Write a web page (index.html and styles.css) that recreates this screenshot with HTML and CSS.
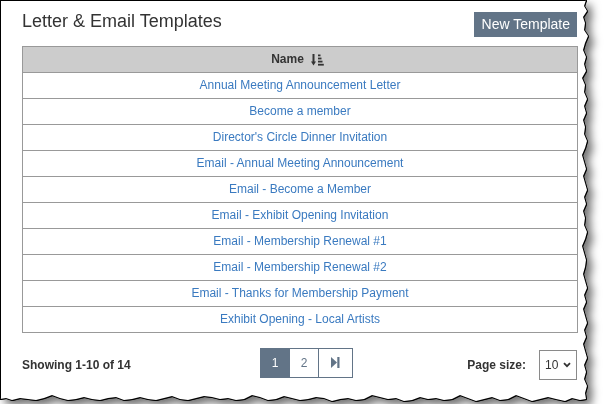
FILE: index.html
```html
<!DOCTYPE html>
<html lang="en">
<head>
<meta charset="utf-8">
<title>Letter &amp; Email Templates</title>
<link rel="stylesheet" href="styles.css">
</head>
<body>
<div class="sheet">
  <div class="paper">
    <div class="topbar">
      <h1 class="title">Letter &amp; Email Templates</h1>
      <button class="btn" type="button">New Template</button>
    </div>
    <table class="grid">
      <thead>
        <tr><th><span class="th-inner">Name <svg class="sort" width="13" height="12" viewBox="0 0 13 12"><path d="M2.5 0V9" stroke="#333" stroke-width="2" fill="none"/><path d="M0 7.5L2.5 11.5L5 7.5Z" fill="#333"/><rect x="7" y="0.5" width="2.5" height="1.8" fill="#333"/><rect x="7" y="3.6" width="3.5" height="1.8" fill="#333"/><rect x="7" y="6.7" width="4.5" height="1.8" fill="#333"/><rect x="7" y="9.8" width="5.8" height="1.8" fill="#333"/></svg></span></th></tr>
      </thead>
      <tbody>
        <tr><td><a class="link" href="#">Annual Meeting Announcement Letter</a></td></tr>
        <tr><td><a class="link" href="#">Become a member</a></td></tr>
        <tr><td><a class="link" href="#">Director's Circle Dinner Invitation</a></td></tr>
        <tr><td><a class="link" href="#">Email - Annual Meeting Announcement</a></td></tr>
        <tr><td><a class="link" href="#">Email - Become a Member</a></td></tr>
        <tr><td><a class="link" href="#">Email - Exhibit Opening Invitation</a></td></tr>
        <tr><td><a class="link" href="#">Email - Membership Renewal #1</a></td></tr>
        <tr><td><a class="link" href="#">Email - Membership Renewal #2</a></td></tr>
        <tr><td><a class="link" href="#">Email - Thanks for Membership Payment</a></td></tr>
        <tr><td><a class="link" href="#">Exhibit Opening - Local Artists</a></td></tr>
      </tbody>
    </table>
    <div class="footer">
      <span class="count">Showing 1-10 of 14</span>
      <nav class="pager">
        <span class="page page-current">1</span>
        <span class="page">2</span>
        <span class="page page-last"><svg width="9" height="11" viewBox="0 0 9 11"><path d="M0 0L6 5.5L0 11Z" fill="#627487"/><rect x="6.3" y="0" width="2.2" height="11" fill="#627487"/></svg></span>
      </nav>
      <div class="size">
        <span class="size-label">Page size:</span>
        <span class="select">10<svg class="chev" width="8" height="6" viewBox="0 0 8 6"><path d="M1 1.2L4 4.2L7 1.2" stroke="#333" stroke-width="1.8" fill="none"/></svg></span>
      </div>
    </div>
  </div>
</div>
</body>
</html>
```

FILE: styles.css
```css
html, body {
  margin: 0;
  padding: 0;
  background: #ffffff;
}

body {
  font-family: "Liberation Sans", Arial, sans-serif;
  color: #333333;
}

.sheet {
  width: 592px;
  height: 404px;
  filter: drop-shadow(1px 0 0 #000000) drop-shadow(0 1px 0 #000000) drop-shadow(5px 5px 4px rgba(0, 0, 0, 0.55));
}

.paper {
  box-sizing: border-box;
  width: 592px;
  height: 404px;
  background: #ffffff;
  border-top: 1px solid #000000;
  border-left: 1px solid #000000;
  padding: 11px 15px 0 21px;
  clip-path: polygon(0 0, 586px 0, 584px 6px, 587px 11px, 583px 17px, 585px 23px, 584px 30px, 588px 36px, 585px 43px, 583px 50px, 586px 57px, 584px 64px, 586px 71px, 582px 78px, 585px 85px, 584px 92px, 587px 99px, 584px 106px, 586px 113px, 583px 120px, 585px 127px, 584px 134px, 587px 141px, 585px 148px, 582px 155px, 584px 162px, 586px 169px, 583px 176px, 585px 183px, 587px 190px, 584px 197px, 586px 204px, 583px 211px, 585px 218px, 584px 225px, 587px 232px, 585px 239px, 582px 246px, 584px 253px, 586px 260px, 585px 267px, 583px 274px, 585px 281px, 587px 288px, 584px 295px, 586px 302px, 583px 309px, 585px 316px, 587px 323px, 584px 330px, 586px 337px, 583px 344px, 585px 351px, 587px 358px, 584px 365px, 586px 372px, 584px 379px, 587px 386px, 585px 393px, 586px 399px, 580px 400px, 572px 398px, 565px 401px, 556px 399px, 548px 397px, 540px 399px, 532px 401px, 524px 398px, 516px 395px, 508px 399px, 500px 400px, 492px 397px, 484px 399px, 476px 401px, 468px 398px, 460px 395px, 452px 399px, 444px 400px, 436px 398px, 428px 399px, 420px 397px, 412px 400px, 404px 401px, 396px 398px, 388px 399px, 380px 397px, 372px 395px, 364px 399px, 356px 400px, 348px 398px, 340px 399px, 332px 401px, 324px 398px, 316px 397px, 308px 399px, 300px 400px, 292px 398px, 284px 396px, 276px 399px, 268px 400px, 260px 397px, 252px 395px, 244px 399px, 236px 400px, 228px 398px, 220px 399px, 212px 397px, 204px 396px, 196px 398px, 188px 400px, 180px 399px, 172px 396px, 164px 398px, 156px 400px, 148px 399px, 140px 397px, 132px 399px, 124px 400px, 116px 397px, 108px 398px, 100px 400px, 92px 399px, 84px 397px, 76px 399px, 68px 400px, 60px 398px, 52px 395px, 44px 398px, 36px 400px, 28px 399px, 20px 398px, 12px 400px, 6px 398px, 0 399px);
}

.topbar {
  display: flex;
  justify-content: space-between;
  align-items: flex-start;
  height: 25px;
}

.title {
  margin: 0;
  font-size: 18px;
  line-height: 18px;
  font-weight: normal;
  color: #333333;
}

.btn {
  height: 25px;
  padding: 0 7px 0 8px;
  border: none;
  border-radius: 0;
  background: #627487;
  color: #ffffff;
  font-family: "Liberation Sans", Arial, sans-serif;
  font-size: 14px;
  line-height: 25px;
}

.grid {
  width: 556px;
  margin-top: 9px;
  border: 1px solid #999999;
  border-collapse: separate;
  border-spacing: 0;
  font-size: 12px;
}

.grid th {
  background: #cccccc;
  padding: 0;
  height: 25px;
  line-height: 25px;
  font-weight: bold;
  color: #333333;
  text-align: center;
}

.th-inner {
  display: inline-flex;
  align-items: center;
  gap: 7px;
  margin-left: -5px;
}

.sort {
  display: block;
}

.grid td {
  padding: 0;
  border-top: 1px solid #999999;
  line-height: 25px;
  text-align: center;
}

.link {
  color: #3a7ac0;
  text-decoration: none;
}

.footer {
  display: grid;
  grid-template-columns: 238px auto 1fr;
  align-items: center;
  margin-top: 12px;
  height: 30px;
}

.count {
  font-size: 12px;
  font-weight: bold;
  line-height: 14px;
  padding-top: 4px;
}

.pager {
  display: flex;
  height: 30px;
  box-sizing: border-box;
  border: 1px solid #627487;
}

.page {
  display: flex;
  align-items: center;
  justify-content: center;
  width: 28px;
  font-size: 12px;
  color: #627487;
  border-left: 1px solid #627487;
}

.page-current {
  border-left: none;
  background: #627487;
  color: #ffffff;
}

.page-last {
  width: 33px;
}

.size {
  justify-self: end;
  display: flex;
  align-items: center;
  gap: 13px;
}

.size-label {
  font-size: 12px;
  font-weight: bold;
  padding-top: 4px;
}

.select {
  box-sizing: border-box;
  display: flex;
  align-items: center;
  width: 38px;
  height: 30px;
  margin-top: 5px;
  padding-left: 5px;
  border: 1px solid #8a8a8a;
  font-size: 12px;
  color: #333333;
}

.chev {
  display: block;
  margin-left: 5px;
}
```
